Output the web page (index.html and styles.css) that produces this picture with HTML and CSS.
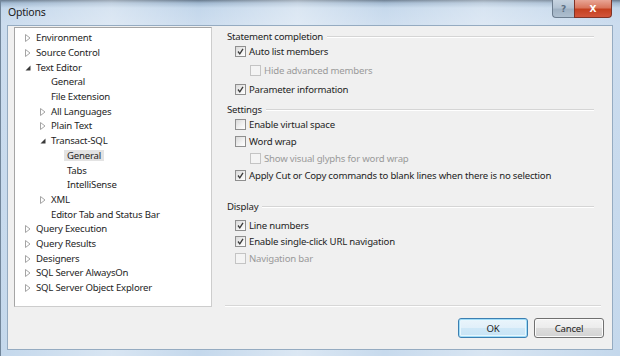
FILE: index.html
```html
<!DOCTYPE html>
<html>
<head>
<meta charset="utf-8">
<title>Options</title>
<link rel="stylesheet" href="styles.css">
</head>
<body>
<div class="window">
  <div class="titlebar">
    <div class="title">Options</div>
    <div class="caption">
      <div class="cap-btn help"><span>?</span></div>
      <div class="cap-btn close"><span>X</span></div>
    </div>
  </div>
  <div class="client">
    <div class="main">
      <div class="tree">
        <div class="node l0"><span class="tw"><svg width="6" height="8" viewBox="0 0 6 8"><path d="M0.5 0.5 L5 4 L0.5 7.5 Z" fill="none" stroke="#a4a4a4"/></svg></span><span>Environment</span></div>
        <div class="node l0"><span class="tw"><svg width="6" height="8" viewBox="0 0 6 8"><path d="M0.5 0.5 L5 4 L0.5 7.5 Z" fill="none" stroke="#a4a4a4"/></svg></span><span>Source Control</span></div>
        <div class="node l0"><span class="tw"><svg width="6" height="6" viewBox="0 0 6 6"><path d="M5.5 0.5 L5.5 5.5 L0.5 5.5 Z" fill="#3a3a3a"/></svg></span><span>Text Editor</span></div>
        <div class="node l1"><span class="tw"></span><span>General</span></div>
        <div class="node l1"><span class="tw"></span><span>File Extension</span></div>
        <div class="node l1"><span class="tw"><svg width="6" height="8" viewBox="0 0 6 8"><path d="M0.5 0.5 L5 4 L0.5 7.5 Z" fill="none" stroke="#a4a4a4"/></svg></span><span>All Languages</span></div>
        <div class="node l1"><span class="tw"><svg width="6" height="8" viewBox="0 0 6 8"><path d="M0.5 0.5 L5 4 L0.5 7.5 Z" fill="none" stroke="#a4a4a4"/></svg></span><span>Plain Text</span></div>
        <div class="node l1"><span class="tw"><svg width="6" height="6" viewBox="0 0 6 6"><path d="M5.5 0.5 L5.5 5.5 L0.5 5.5 Z" fill="#3a3a3a"/></svg></span><span>Transact-SQL</span></div>
        <div class="node l2"><span class="tw"></span><span class="sel">General</span></div>
        <div class="node l2"><span class="tw"></span><span>Tabs</span></div>
        <div class="node l2"><span class="tw"></span><span>IntelliSense</span></div>
        <div class="node l1"><span class="tw"><svg width="6" height="8" viewBox="0 0 6 8"><path d="M0.5 0.5 L5 4 L0.5 7.5 Z" fill="none" stroke="#a4a4a4"/></svg></span><span>XML</span></div>
        <div class="node l1"><span class="tw"></span><span>Editor Tab and Status Bar</span></div>
        <div class="node l0"><span class="tw"><svg width="6" height="8" viewBox="0 0 6 8"><path d="M0.5 0.5 L5 4 L0.5 7.5 Z" fill="none" stroke="#a4a4a4"/></svg></span><span>Query Execution</span></div>
        <div class="node l0"><span class="tw"><svg width="6" height="8" viewBox="0 0 6 8"><path d="M0.5 0.5 L5 4 L0.5 7.5 Z" fill="none" stroke="#a4a4a4"/></svg></span><span>Query Results</span></div>
        <div class="node l0"><span class="tw"><svg width="6" height="8" viewBox="0 0 6 8"><path d="M0.5 0.5 L5 4 L0.5 7.5 Z" fill="none" stroke="#a4a4a4"/></svg></span><span>Designers</span></div>
        <div class="node l0"><span class="tw"><svg width="6" height="8" viewBox="0 0 6 8"><path d="M0.5 0.5 L5 4 L0.5 7.5 Z" fill="none" stroke="#a4a4a4"/></svg></span><span>SQL Server AlwaysOn</span></div>
        <div class="node l0"><span class="tw"><svg width="6" height="8" viewBox="0 0 6 8"><path d="M0.5 0.5 L5 4 L0.5 7.5 Z" fill="none" stroke="#a4a4a4"/></svg></span><span>SQL Server Object Explorer</span></div>
      </div>
      <div class="pane">
        <div class="options">
          <div class="ghead g1"><span>Statement completion</span><i class="rule"></i></div>
          <div class="opt r19 lead2"><span class="cb on"><svg width="9" height="9" viewBox="0 0 9 9"><path d="M2 4.5 L3.8 6.8 L7 1.8" fill="none" stroke="#3b3b3b" stroke-width="1.3"/></svg></span><span>Auto list members</span></div>
          <div class="opt r19 sub off"><span class="cb"></span><span>Hide advanced members</span></div>
          <div class="opt r19"><span class="cb on"><svg width="9" height="9" viewBox="0 0 9 9"><path d="M2 4.5 L3.8 6.8 L7 1.8" fill="none" stroke="#3b3b3b" stroke-width="1.3"/></svg></span><span>Parameter information</span></div>
          <div class="ghead g2"><span>Settings</span><i class="rule"></i></div>
          <div class="opt r17 lead1"><span class="cb"></span><span>Enable virtual space</span></div>
          <div class="opt r17"><span class="cb"></span><span>Word wrap</span></div>
          <div class="opt r17 sub off"><span class="cb"></span><span>Show visual glyphs for word wrap</span></div>
          <div class="opt r17"><span class="cb on"><svg width="9" height="9" viewBox="0 0 9 9"><path d="M2 4.5 L3.8 6.8 L7 1.8" fill="none" stroke="#3b3b3b" stroke-width="1.3"/></svg></span><span>Apply Cut or Copy commands to blank lines when there is no selection</span></div>
          <div class="ghead g3"><span>Display</span><i class="rule"></i></div>
          <div class="opt r16 first"><span class="cb on"><svg width="9" height="9" viewBox="0 0 9 9"><path d="M2 4.5 L3.8 6.8 L7 1.8" fill="none" stroke="#3b3b3b" stroke-width="1.3"/></svg></span><span>Line numbers</span></div>
          <div class="opt r16"><span class="cb on"><svg width="9" height="9" viewBox="0 0 9 9"><path d="M2 4.5 L3.8 6.8 L7 1.8" fill="none" stroke="#3b3b3b" stroke-width="1.3"/></svg></span><span>Enable single-click URL navigation</span></div>
          <div class="opt r16 off"><span class="cb"></span><span>Navigation bar</span></div>
        </div>
        <div class="sep"></div>
      </div>
    </div>
    <div class="buttons">
      <div class="btn default">OK</div>
      <div class="btn">Cancel</div>
    </div>
  </div>
</div>
</body>
</html>
```

FILE: styles.css
```css
html, body {
  margin: 0;
  padding: 0;
}
body {
  width: 620px;
  height: 356px;
  overflow: hidden;
  font-family: "Noto Sans", "Open Sans", sans-serif;
  font-size: 9.6px;
  letter-spacing: -0.2px;
  color: #1e1e1e;
  background:
    linear-gradient(90deg, rgba(255,255,255,0) 0, rgba(255,255,255,0.35) 18%, rgba(255,255,255,0) 32%, rgba(255,255,255,0.4) 48%, rgba(255,255,255,0.05) 62%, rgba(255,255,255,0.35) 78%, rgba(255,255,255,0) 100%),
    linear-gradient(180deg, #66788b 0, #9fb7cf 3px, #c3d7eb 8px, #cbdcee 24px, #c4d8ec 100%);
}
.window {
  height: 356px;
  display: flex;
  flex-direction: column;
  box-sizing: border-box;
  border-left: 1px solid #72869a;
}
.titlebar {
  height: 25px;
  display: flex;
  align-items: flex-start;
  flex: none;
}
.title {
  padding: 5px 0 0 7px;
  font-size: 10.5px;
  line-height: 14px;
  color: #1a1a1a;
}
.caption {
  margin-left: auto;
  margin-right: 8px;
  display: flex;
}
.cap-btn {
  height: 18px;
  box-sizing: border-box;
  display: flex;
  align-items: center;
  justify-content: center;
  border: 1px solid #6c7d8f;
  border-top: none;
  font-family: "DejaVu Sans", sans-serif;
  font-weight: bold;
  letter-spacing: 0;
}
.help {
  width: 22px;
  border-bottom-left-radius: 4px;
  background: linear-gradient(180deg, #c7d4e1 0, #b3c3d3 45%, #9fb1c3 55%, #aebfcf 100%);
  color: #5e7184;
  font-size: 9px;
  border-right: none;
}
.close {
  width: 38px;
  border-bottom-right-radius: 4px;
  background: linear-gradient(180deg, #e8a595 0, #d9765d 45%, #c4401f 55%, #d2553a 100%);
  color: #ffffff;
  font-size: 9px;
  border-color: #803326;
}
.client {
  flex: 1;
  margin: 0 7px 6px 6px;
  background: #f0f0f0;
  border: 1px solid #95abc1;
  display: flex;
  flex-direction: column;
}
.main {
  display: flex;
  margin: 1px 11px 0 6px;
}
.tree {
  width: 198px;
  height: 280px;
  box-sizing: border-box;
  flex: none;
  background: #ffffff;
  border: 1px solid #a5a5a5;
  border-right-color: #cdcdcd;
  border-bottom-color: #cdcdcd;
  padding: 3px 0 0 10px;
}
.node {
  height: 14.7px;
  display: flex;
  align-items: center;
  white-space: nowrap;
  line-height: 14px;
}
.l1 { padding-left: 15px; }
.l2 { padding-left: 31px; }
.tw {
  width: 11px;
  flex: none;
  display: flex;
  align-items: center;
}
.sel {
  background: #e3e3e3;
  padding: 0 3px;
  margin-left: -3px;
  line-height: 11px;
  height: 11px;
  display: inline-flex;
  align-items: center;
}
.pane {
  flex: 1;
  margin-left: 13px;
  display: flex;
  flex-direction: column;
  height: 280px;
}
.options {
  flex: 1;
  padding: 0 7px 0 2px;
}
.ghead {
  height: 16px;
  display: flex;
  align-items: center;
  white-space: nowrap;
}
.g1 { margin-top: 1px; }
.g2 { margin-top: 2px; }
.g3 { margin-top: 14px; }
.rule {
  flex: 1;
  height: 0;
  border-top: 1px solid #d5d5d5;
  border-bottom: 1px solid #ffffff;
  margin-left: 4px;
  margin-top: 1px;
}
.opt {
  display: flex;
  align-items: center;
  padding-left: 8px;
  white-space: nowrap;
}
.r19 { height: 19px; }
.r17 { height: 17px; }
.r16 { height: 16.5px; }
.lead2 { margin-top: -2px; }
.lead1 { margin-top: -1px; }
.first { margin-top: 3px; }
.sub { padding-left: 23px; }
.off { color: #9a9a9a; }
.cb {
  width: 11px;
  height: 11px;
  box-sizing: border-box;
  flex: none;
  margin-right: 3px;
  border: 1px solid #8f8f8f;
  background: linear-gradient(135deg, #d9d9d9 0, #f2f2f2 60%, #ffffff 100%);
  display: flex;
  align-items: center;
  justify-content: center;
}
.off .cb {
  border-color: #c4c4c4;
  background: #f4f4f4;
}
.sep {
  height: 0;
  border-top: 1px solid #d7d7d7;
  border-bottom: 1px solid #ffffff;
  flex: none;
}
.buttons {
  display: flex;
  justify-content: flex-end;
  gap: 6px;
  margin: 11px 8px 0 0;
}
.btn {
  width: 70px;
  height: 20px;
  box-sizing: border-box;
  border: 1px solid #707070;
  border-radius: 3px;
  background: linear-gradient(180deg, #f4f4f4 0, #ececec 48%, #dddddd 52%, #d3d3d3 100%);
  display: flex;
  align-items: center;
  justify-content: center;
  color: #1e1e1e;
  box-shadow: inset 0 0 0 1px #fbfbfb;
}
.btn.default {
  border-color: #3c7fb1;
  background: linear-gradient(180deg, #eaf5fb 0, #e1f0fa 48%, #cfe8f7 52%, #c6e3f5 100%);
  box-shadow: inset 0 0 0 1px #9fdcf8, inset 0 0 0 2px #e7f6fd;
}
```
